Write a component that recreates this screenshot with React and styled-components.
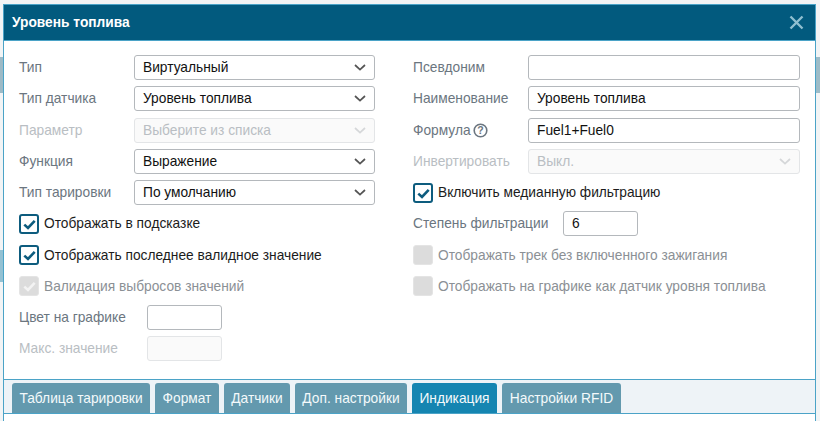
import React from "react";
import styled, { createGlobalStyle } from "styled-components";

const Global = createGlobalStyle`
  html, body { margin: 0; padding: 0; width: 820px; height: 421px; overflow: hidden; background: #f2f4f5; }
  body { font-family: "Liberation Sans", Arial, sans-serif; font-size: 13.75px; }
`;

const Page = styled.div`
  position: relative; width: 820px; height: 421px; box-sizing: border-box; padding: 4px 4px 0 3px; overflow: hidden;
`;
const BackdropBar = styled.div`
  position: absolute; top: ${p => p.$top}px; height: ${p => p.$h}px; width: 5px;
  ${p => p.$right ? "right: 0;" : "left: 0;"} background: ${p => p.$c};
`;
const Modal = styled.div`
  position: relative; height: 425px; box-sizing: border-box; background: #fff;
  border: 1px solid #4ba3c7; border-bottom: 0; display: flex; flex-direction: column;
`;
const Header = styled.div`
  height: 36px; flex: none; box-sizing: border-box; background: #025a7e; display: flex; align-items: center;
  justify-content: space-between; padding: 0 11px 0 8px; border-bottom: 1px solid #4ba3c7;
`;
const Title = styled.span`color: #fff; font-weight: 700; font-size: 13.75px;`;
const Close = styled.svg`width: 15px; height: 15px; display: block;`;
const Body = styled.div`
  height: 338px; flex: none; box-sizing: border-box; padding: 14px 15px 0 15px;
  display: grid; grid-template-columns: 356px 387px; column-gap: 38px;
`;
const Column = styled.div`display: flex; flex-direction: column; align-items: flex-start;`;
const Row = styled.div`
  display: flex; align-items: center; height: 25px; width: 100%; margin-bottom: ${p => p.$gap ?? 6}px;
`;
const Label = styled.label`
  width: ${p => p.$w ?? 115}px; flex: none; color: ${p => p.$off ? "#b9bec3" : "#6b7680"};
  display: flex; align-items: center; gap: 2px; line-height: 16px;
`;
const Field = styled.div`
  box-sizing: border-box; height: 25px; width: ${p => p.$w ? p.$w + "px" : "auto"}; flex: ${p => p.$w ? "none" : 1};
  border: 1px solid ${p => p.$off ? "#e3e5e7" : "#b4b8bc"}; border-radius: 3px;
  background: ${p => p.$off ? "#fafafa" : "#fff"}; color: ${p => p.$off ? "#b9bec3" : "#111"};
  padding: 0 8px; display: flex; align-items: center; justify-content: space-between; line-height: 16px;
`;
const Chevron = styled.svg`width: 12px; height: 7px; flex: none;`;
const CheckRow = styled.div`
  display: flex; align-items: center; gap: 5px; height: 20px; line-height: 16px; margin-top: ${p => p.$top ?? 0}px;
  margin-bottom: ${p => p.$gap ?? 11}px; color: ${p => p.$off ? "#8b9095" : "#1c1c1c"};
`;
const CheckText = styled.span`padding-top: ${p => p.$drop ? 2 : 0}px;`;
const Box = styled.span`
  box-sizing: border-box; width: 20px; height: 20px; border-radius: 3px; flex: none;
  display: flex; align-items: center; justify-content: center;
  border: ${p => p.$off ? "1px solid #e4e4e4" : "2px solid #0d5c7e"};
  background: ${p => p.$off ? "#dcdcdc" : "#fff"};
`;
const Tick = styled.svg`width: 13px; height: 11px;`;
const Tabs = styled.div`
  flex: none; height: 35px; box-sizing: border-box; background: #eef3f7; display: flex; gap: 5px;
  align-items: flex-end; padding: 0 0 0 8px;
  border-top: 1px solid #4ba3c7; border-bottom: 1px solid #4ba3c7;
`;
const Tab = styled.div`
  height: 30px; box-sizing: border-box; border-radius: 3px 3px 0 0; white-space: nowrap;
  display: flex; align-items: center; color: #f4f9fb; background: ${p => p.$active ? "#1585b1" : "#6399ae"};
  width: ${p => p.$w}px; justify-content: center;
`;
const Help = styled.svg`width: 15px; height: 15px; flex: none;`;

const Arrow = ({ off }) => (
  <Chevron viewBox="0 0 12 7"><path d="M1 1l5 4.6L11 1" fill="none" stroke={off ? "#d5d7d9" : "#555"} strokeWidth="1.7" /></Chevron>
);
const Check = ({ off }) => (
  <Tick viewBox="0 0 13 11"><path d="M1.3 5.6l3.7 3.4L11.7 1.8" fill="none" stroke={off ? "#f3f3f3" : "#0d5c7e"} strokeWidth="2.6" /></Tick>
);
const Select = ({ children, off }) => <Field $off={off}><span>{children}</span><Arrow off={off} /></Field>;

export default function App() {
  return (
    <Page>
      <Global />
      <BackdropBar $top={57} $h={36} $c="#9dbac6" />
      <BackdropBar $top={250} $h={32} $c="#93c1d3" />
      <BackdropBar $right $top={57} $h={36} $c="#9dbcc8" />
      <Modal>
        <Header>
          <Title>Уровень топлива</Title>
          <Close viewBox="0 0 15 15"><path d="M1.5 1.5l12 12M13.5 1.5l-12 12" stroke="#8fbfd0" strokeWidth="2.4" /></Close>
        </Header>
        <Body>
          <Column>
            <Row><Label>Тип</Label><Select>Виртуальный</Select></Row>
            <Row $gap={7}><Label>Тип датчика</Label><Select>Уровень топлива</Select></Row>
            <Row><Label $off>Параметр</Label><Select off>Выберите из списка</Select></Row>
            <Row><Label>Функция</Label><Select>Выражение</Select></Row>
            <Row $gap={9}><Label>Тип тарировки</Label><Select>По умолчанию</Select></Row>
            <CheckRow><Box><Check /></Box><CheckText>Отображать в подсказке</CheckText></CheckRow>
            <CheckRow><Box><Check /></Box><CheckText $drop>Отображать последнее валидное значение</CheckText></CheckRow>
            <CheckRow $gap={9} $off><Box $off><Check off /></Box><CheckText $drop>Валидация выбросов значений</CheckText></CheckRow>
            <Row><Label $w={128}>Цвет на графике</Label><Field $w={75} /></Row>
            <Row><Label $w={128} $off>Макс. значение</Label><Field $w={75} $off /></Row>
          </Column>
          <Column>
            <Row><Label>Псевдоним</Label><Field /></Row>
            <Row $gap={7}><Label>Наименование</Label><Field>Уровень топлива</Field></Row>
            <Row><Label>Формула
              <Help viewBox="0 0 15 15"><circle cx="7.5" cy="7.5" r="6.3" fill="none" stroke="#6b7680" strokeWidth="1.6" /><text x="7.5" y="11.2" textAnchor="middle" fontSize="10.5" fontWeight="700" fontFamily="Liberation Sans" fill="#6b7680">?</text></Help>
            </Label><Field>Fuel1+Fuel0</Field></Row>
            <Row><Label $off>Инвертировать</Label><Select off>Выкл.</Select></Row>
            <CheckRow $top={3} $gap={8}><Box><Check /></Box><CheckText>Включить медианную фильтрацию</CheckText></CheckRow>
            <Row $gap={9}><Label $w={150}>Степень фильтрации</Label><Field $w={75}>6</Field></Row>
            <CheckRow $off><Box $off /><CheckText $drop>Отображать трек без включенного зажигания</CheckText></CheckRow>
            <CheckRow $off><Box $off /><CheckText $drop>Отображать на графике как датчик уровня топлива</CheckText></CheckRow>
          </Column>
        </Body>
        <Tabs>
          <Tab $w={138}>Таблица тарировки</Tab>
          <Tab $w={64}>Формат</Tab>
          <Tab $w={66}>Датчики</Tab>
          <Tab $w={112}>Доп. настройки</Tab>
          <Tab $w={85} $active>Индикация</Tab>
          <Tab $w={119}>Настройки RFID</Tab>
        </Tabs>
      </Modal>
    </Page>
  );
}
